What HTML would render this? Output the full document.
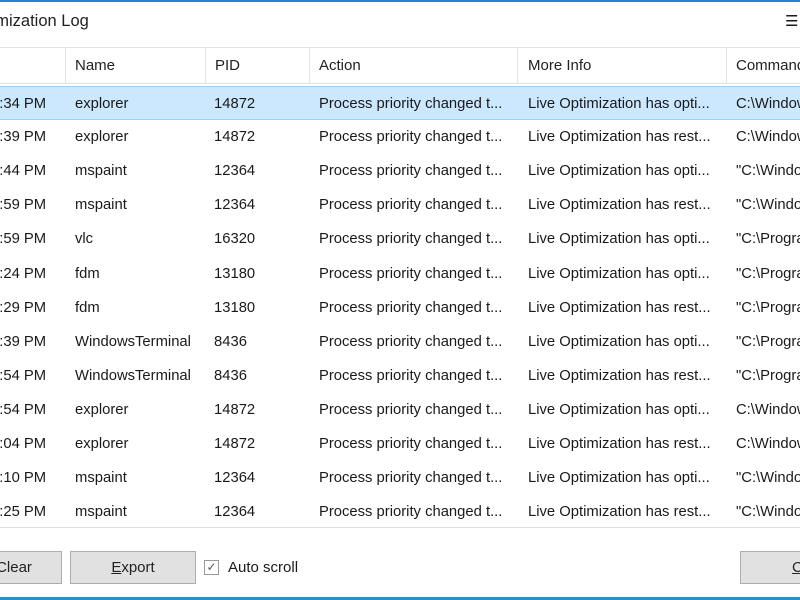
<!DOCTYPE html>
<html><head><meta charset="utf-8"><style>
*{margin:0;padding:0;box-sizing:border-box}
body{width:800px;height:600px;overflow:hidden;background:#fff;font-family:"Liberation Sans",sans-serif;color:#1a1a1a;position:relative}
.a{position:absolute;white-space:nowrap}
.top{left:0;top:0;width:800px;height:2px;background:#2b7fd4}
.bot{left:0;top:597px;width:800px;height:3px;background:#2b8fc8}
.title{left:-35px;top:12px;font-size:16.5px;color:#222}
.hdr{left:0;top:47px;width:800px;height:37px;border-top:1px solid #e3e3e3;border-bottom:1px solid #e3e3e3;background:#fff}
.hd{top:57px;font-size:15px;color:#222}
.vl{top:48px;width:1px;height:35px;background:#e3e3e3}
.row{left:0;width:800px;height:34px;font-size:14.8px}
.row span{position:absolute;top:9px}
.sel{background:#cce8ff;border-top:1px solid #99d1ff;border-bottom:1px solid #99d1ff}
.btn{top:551px;height:33px;background:#e1e1e1;border:1px solid #adadad;font-size:15px;text-align:center;line-height:31px;color:#222}
</style></head><body>
<div class="a top"></div>
<div class="a title">Optimization Log</div>
<div class="a" style="left:785px;top:12px;font-size:15px">☰</div>
<div class="a" style="left:0;top:45px;width:800px;height:483px;background:#fff;border-bottom:1px solid #e0e0e0"></div>
<div class="a hdr"></div>
<div class="a vl" style="left:65px"></div><div class="a vl" style="left:205px"></div><div class="a vl" style="left:309px"></div><div class="a vl" style="left:517px"></div><div class="a vl" style="left:726px"></div>
<div class="a hd" style="left:75px">Name</div><div class="a hd" style="left:215px">PID</div><div class="a hd" style="left:319px">Action</div><div class="a hd" style="left:528px">More Info</div><div class="a hd" style="left:736px">Command</div>
<div id="rows"></div>
<script>
var d=[["4:34 PM","explorer","14872","opti","C:\\Windows"],["4:39 PM","explorer","14872","rest","C:\\Windows"],["4:44 PM","mspaint","12364","opti","\"C:\\Windows"],["4:59 PM","mspaint","12364","rest","\"C:\\Windows"],["4:59 PM","vlc","16320","opti","\"C:\\Program"],["5:24 PM","fdm","13180","opti","\"C:\\Program"],["5:29 PM","fdm","13180","rest","\"C:\\Program"],["5:39 PM","WindowsTerminal","8436","opti","\"C:\\Program"],["5:54 PM","WindowsTerminal","8436","rest","\"C:\\Program"],["5:54 PM","explorer","14872","opti","C:\\Windows"],["6:04 PM","explorer","14872","rest","C:\\Windows"],["6:10 PM","mspaint","12364","opti","\"C:\\Windows"],["6:25 PM","mspaint","12364","rest","\"C:\\Windows"]];
var h="";d.forEach(function(r,i){var y=86+i*34.1;h+='<div class="a row'+(i==0?' sel':'')+'" style="top:'+y+'px"><span style="left:-9px">'+r[0]+'</span><span style="left:75px">'+r[1]+'</span><span style="left:214px">'+r[2]+'</span><span style="left:319px">Process priority changed t...</span><span style="left:528px">Live Optimization has '+r[3]+'...</span><span style="left:736px">'+r[4]+'</span></div>'});
document.getElementById('rows').innerHTML=h;
</script>
<div class="a btn" style="left:-20px;width:82px"><span style="margin-left:-14px">Clear</span></div>
<div class="a btn" style="left:70px;width:126px"><u>E</u>xport</div>
<div class="a" style="left:204px;top:560px;width:15px;height:15px;border:1px solid #999;background:#fff;font-size:12px;line-height:13px;text-align:center;color:#555">✓</div>
<div class="a" style="left:228px;top:559px;font-size:15px">Auto scroll</div>
<div class="a btn" style="left:740px;width:90px;text-align:left;padding-left:51px"><u>C</u>lose</div>
<div class="a bot"></div>
</body></html>
